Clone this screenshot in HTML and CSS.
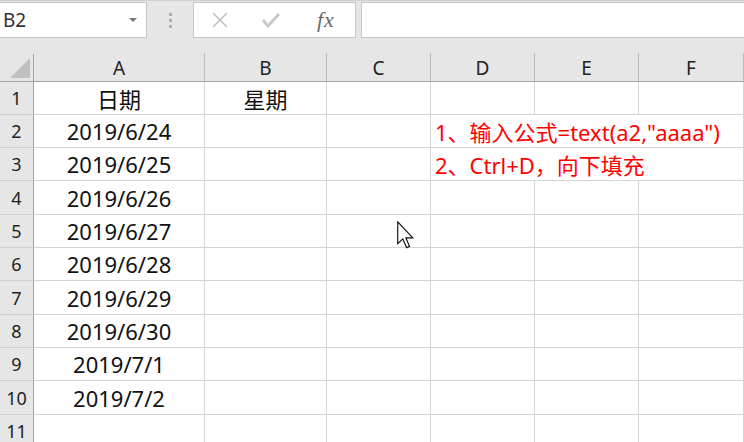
FILE: index.html
```html
<!DOCTYPE html>
<html lang="zh-CN">
<head>
  <meta charset="UTF-8" />
  <title>Excel - 星期</title>
  <link rel="stylesheet" href="styles.css">
</head>
<body>

<div class="toolbar">
  <div class="namebox">
    <span class="ref">B2</span>
    <span class="caret"></span>
  </div>
  <div class="grip"><i></i><i></i><i></i></div>
  <div class="fxbtns">
    <svg class="ico" width="18" height="18" viewBox="0 0 18 18">
      <path d="M2 2 L16 16 M16 2 L2 16" stroke="#c2c2c2" stroke-width="1.6" fill="none" />
    </svg>
    <svg class="ico" width="20" height="18" viewBox="0 0 20 18">
      <path d="M2 9 L7 15 L18 3" stroke="#c8c8c8" stroke-width="3" fill="none" />
    </svg>
    <span class="fx">fx</span>
  </div>
  <div class="fxinput"></div>
</div>

<div class="sheet">
  <div class="corner"><span class="tri"></span></div>
  <div class="colhead">A</div>
  <div class="colhead">B</div>
  <div class="colhead">C</div>
  <div class="colhead">D</div>
  <div class="colhead">E</div>
  <div class="colhead">F</div>

  <div class="rowhead">1</div>
  <div class="cell c">日期</div>
  <div class="cell c">星期</div>
  <div class="cell"></div><div class="cell"></div><div class="cell"></div><div class="cell"></div>

  <div class="rowhead">2</div>
  <div class="cell c">2019/6/24</div>
  <div class="cell"></div>
  <div class="cell"></div>
  <div class="cell ov"><span class="note">1、输入公式=text(a2,"aaaa")</span></div>
  <div class="cell ov"></div>
  <div class="cell"></div>

  <div class="rowhead">3</div>
  <div class="cell c">2019/6/25</div>
  <div class="cell"></div>
  <div class="cell"></div>
  <div class="cell ov"><span class="note">2、Ctrl+D，向下填充</span></div>
  <div class="cell ov"></div>
  <div class="cell"></div>

  <div class="rowhead">4</div>
  <div class="cell c">2019/6/26</div>
  <div class="cell"></div><div class="cell"></div><div class="cell"></div><div class="cell"></div><div class="cell"></div>

  <div class="rowhead">5</div>
  <div class="cell c">2019/6/27</div>
  <div class="cell"></div><div class="cell"></div><div class="cell"></div><div class="cell"></div><div class="cell"></div>

  <div class="rowhead">6</div>
  <div class="cell c">2019/6/28</div>
  <div class="cell"></div><div class="cell"></div><div class="cell"></div><div class="cell"></div><div class="cell"></div>

  <div class="rowhead">7</div>
  <div class="cell c">2019/6/29</div>
  <div class="cell"></div><div class="cell"></div><div class="cell"></div><div class="cell"></div><div class="cell"></div>

  <div class="rowhead">8</div>
  <div class="cell c">2019/6/30</div>
  <div class="cell"></div><div class="cell"></div><div class="cell"></div><div class="cell"></div><div class="cell"></div>

  <div class="rowhead">9</div>
  <div class="cell c">2019/7/1</div>
  <div class="cell"></div><div class="cell"></div><div class="cell"></div><div class="cell"></div><div class="cell"></div>

  <div class="rowhead">10</div>
  <div class="cell c">2019/7/2</div>
  <div class="cell"></div><div class="cell"></div><div class="cell"></div><div class="cell"></div><div class="cell"></div>

  <div class="rowhead">11</div>
  <div class="cell"></div><div class="cell"></div><div class="cell"></div><div class="cell"></div><div class="cell"></div><div class="cell"></div>
</div>

<!-- mouse pointer over C5 -->
<svg class="pointer" width="19" height="28" viewBox="0 0 13 19">
  <path d="M0.5 0.5 L0.5 15.5 L4 12.2 L6.6 18.2 L8.6 17.3 L6.1 11.5 L10.8 11.5 Z" fill="#fff" stroke="#111" stroke-width="0.8" stroke-linejoin="miter" />
</svg>

</body>
</html>
```

FILE: styles.css
```css
html, body {
  margin: 0;
  height: 100%;
  overflow: hidden;
  background: #fff;
  font-family: 'Noto Sans', 'Noto Sans CJK SC', sans-serif;
}

/* formula bar */
.toolbar {
  height: 54px;
  box-sizing: border-box;
  background: #e6e6e6;
  border-top: 1px solid #cfcfcf;
  padding-top: 1px;
  display: flex;
  align-items: flex-start;
}
.namebox, .fxbtns, .fxinput {
  height: 36px;
  box-sizing: border-box;
  background: #fff;
  border: 1px solid #c6c6c6;
}
.namebox {
  width: 147px;
  border-left: none;
  display: flex;
  align-items: center;
  justify-content: space-between;
  padding: 0 9px 0 3px;
}
.ref {
  font-size: 19px;
  color: #333;
}
.caret {
  width: 0;
  height: 0;
  border-left: 4px solid transparent;
  border-right: 4px solid transparent;
  border-top: 4px solid #777;
}
.grip {
  width: 46px;
  height: 36px;
  display: flex;
  flex-direction: column;
  align-items: center;
  justify-content: center;
  gap: 3px;
}
.grip i {
  display: block;
  width: 3px;
  height: 3px;
  background: #adadad;
}
.fxbtns {
  width: 163px;
  display: flex;
  align-items: center;
  padding-left: 17px;
  gap: 32px;
}
.fxbtns .ico { display: block; }
.fx {
  font-family: 'Liberation Serif', serif;
  font-style: italic;
  font-size: 22px;
  color: #6a6a6a;
  margin-left: 4px;
  letter-spacing: 1px;
}
.fxinput {
  flex: 1;
  margin-left: 5px;
  border-right: none;
}

/* grid */
.sheet {
  display: grid;
  grid-template-columns: 34px 171px 122px 104px 104px 104px 1fr;
  grid-template-rows: 28px 33px 33px 33px 34px 33px 33px 34px 33px 33px 34px 33px;
}
.sheet > div {
  box-sizing: border-box;
  min-width: 0;
}
.corner {
  position: relative;
  background: #e6e6e6;
  border-right: 1px solid #a3a3a3;
  border-bottom: 1px solid #a3a3a3;
}
.tri {
  position: absolute;
  right: 3px;
  bottom: 3px;
  width: 0;
  height: 0;
  border-left: 20px solid transparent;
  border-bottom: 20px solid #c0c0c0;
}
.colhead {
  background: #e6e6e6;
  border-right: 1px solid #bdbdbd;
  border-bottom: 1px solid #a3a3a3;
  font-size: 19px;
  color: #222;
  text-align: center;
  line-height: 30px;
  margin-top: -1px;
}
.rowhead {
  background: #e6e6e6;
  border-right: 1px solid #a3a3a3;
  border-bottom: 1px solid #cfcfcf;
  font-size: 18px;
  color: #222;
  display: flex;
  align-items: center;
  justify-content: center;
}
.cell {
  border-right: 1px solid #d4d4d4;
  border-bottom: 1px solid #d4d4d4;
  font-size: 22px;
  color: #111;
  display: flex;
  align-items: center;
  white-space: nowrap;
}
.cell.c { justify-content: center; }
.cell.ov { border-right-color: transparent; }
.note {
  color: #ff0000;
  padding-left: 4px;
  position: relative;
  z-index: 1;
}

.pointer {
  position: absolute;
  left: 397px;
  top: 221px;
}
```
